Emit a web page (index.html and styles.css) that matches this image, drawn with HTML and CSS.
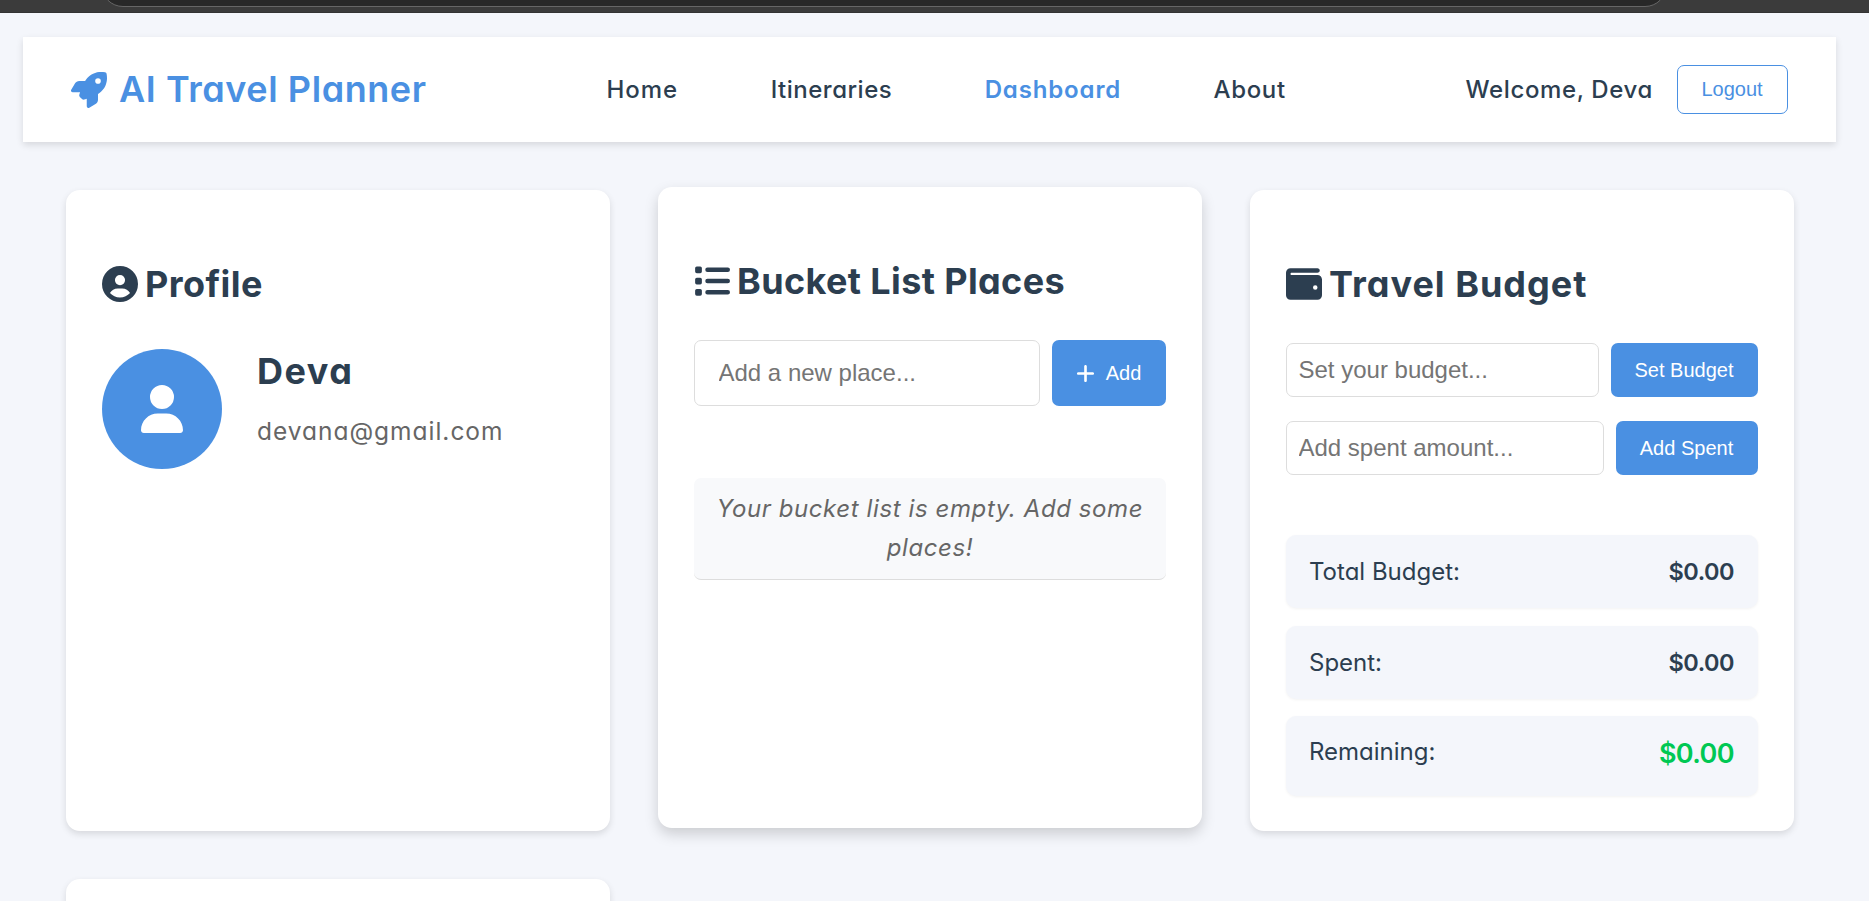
FILE: index.html
```html
<!DOCTYPE html>
<html lang="en">
<head>
<meta charset="utf-8">
<title>AI Travel Planner</title>
<link rel="stylesheet" href="styles.css">
</head>
<body>
<div class="browser-edge"><div class="address-bar"></div></div>
<header class="header">
  <div class="logo">
    <svg class="logo-icon" viewBox="0 0 512 512"><path d="M156.6 384.9L125.7 354c-8.5-8.5-11.5-20.8-7.7-32.2c3-8.9 7-20.5 11.8-33.8L24 288c-8.6 0-16.6-4.6-20.9-12.1s-4.2-16.7 .2-24.1l52.5-88.5c13-21.9 36.5-35.3 61.9-35.3l82.3 0c2.4-4 4.8-7.7 7.2-11.3C289.1-4.1 411.1-8.1 483.9 5.3c11.6 2.1 20.6 11.2 22.8 22.8c13.4 72.9 9.3 194.8-111.4 276.7c-3.5 2.4-7.3 4.8-11.3 7.2l0 82.3c0 25.4-13.4 49-35.3 61.9l-88.5 52.5c-7.4 4.4-16.6 4.5-24.1 .2s-12.1-12.2-12.1-20.9l0-107.2c-14.1 4.9-26.4 8.9-35.7 11.9c-11.2 3.6-23.4 .5-31.8-7.8zM384 168a40 40 0 1 0 0-80 40 40 0 1 0 0 80z"/></svg>
    <span class="logo-text">AI Travel Planner</span>
  </div>
  <nav class="nav">
    <a class="nav-link home">Home</a>
    <a class="nav-link itineraries">Itineraries</a>
    <a class="nav-link active">Dashboard</a>
    <a class="nav-link about">About</a>
  </nav>
  <div class="user">
    <span class="welcome">Welcome, Deva</span>
    <button class="logout">Logout</button>
  </div>
</header>
<main class="grid">
  <section class="card">
    <h2 class="title"><svg class="title-icon" viewBox="0 0 512 512"><path d="M399 384.2C376.9 345.8 335.4 320 288 320l-64 0c-47.4 0-88.9 25.8-111 64.2c35.2 39.2 86.2 63.8 143 63.8s107.8-24.7 143-63.8zM0 256a256 256 0 1 1 512 0A256 256 0 1 1 0 256zm256 16a72 72 0 1 0 0-144 72 72 0 1 0 0 144z"/></svg><span class="t-profile">Profile</span></h2>
    <div class="profile">
      <div class="avatar"><svg viewBox="0 0 448 512"><path d="M224 256A128 128 0 1 0 224 0a128 128 0 1 0 0 256zm-45.7 48C79.8 304 0 383.8 0 482.3C0 498.7 13.3 512 29.7 512l388.6 0c16.4 0 29.7-13.3 29.7-29.7C448 383.8 368.2 304 269.7 304l-91.4 0z"/></svg></div>
      <div class="profile-info">
        <h3 class="name">Deva</h3>
        <p class="email">devana@gmail.com</p>
      </div>
    </div>
  </section>
  <section class="card raised">
    <h2 class="title"><svg class="title-icon" viewBox="0 0 512 512"><path d="M40 48h48a24 24 0 0 1 24 24v48a24 24 0 0 1-24 24H40a24 24 0 0 1-24-24V72a24 24 0 0 1 24-24zM40 208h48a24 24 0 0 1 24 24v48a24 24 0 0 1-24 24H40a24 24 0 0 1-24-24v-48a24 24 0 0 1 24-24zM40 368h48a24 24 0 0 1 24 24v48a24 24 0 0 1-24 24H40a24 24 0 0 1-24-24v-48a24 24 0 0 1 24-24zM192 64h288a32 32 0 0 1 0 64H192a32 32 0 0 1 0-64zM192 224h288a32 32 0 0 1 0 64H192a32 32 0 0 1 0-64zM192 384h288a32 32 0 0 1 0 64H192a32 32 0 0 1 0-64z"/></svg><span class="t-bucket">Bucket List Places</span></h2>
    <div class="form-row place-row">
      <input class="field" type="text" placeholder="Add a new place...">
      <button class="btn add"><svg viewBox="0 0 448 512"><path d="M256 80c0-17.7-14.3-32-32-32s-32 14.3-32 32l0 144L48 224c-17.7 0-32 14.3-32 32s14.3 32 32 32l144 0 0 144c0 17.7 14.3 32 32 32s32-14.3 32-32l0-144 144 0c17.7 0 32-14.3 32-32s-14.3-32-32-32l-144 0 0-144z"/></svg>Add</button>
    </div>
    <p class="empty">Your bucket list is empty. Add some places!</p>
  </section>
  <section class="card">
    <h2 class="title"><svg class="title-icon" viewBox="0 0 512 512"><path d="M64 32C28.7 32 0 60.7 0 96L0 416c0 35.3 28.7 64 64 64l384 0c35.3 0 64-28.7 64-64l0-224c0-35.3-28.7-64-64-64L80 128c-8.8 0-16-7.2-16-16s7.2-16 16-16l368 0c17.7 0 32-14.3 32-32s-14.3-32-32-32L64 32zM416 272a32 32 0 1 1 0 64 32 32 0 1 1 0-64z"/></svg><span class="t-budget">Travel Budget</span></h2>
    <div class="form-row"><input class="field" type="text" placeholder="Set your budget..."><button class="btn set">Set Budget</button></div>
    <div class="form-row"><input class="field" type="text" placeholder="Add spent amount..."><button class="btn spent">Add Spent</button></div>
    <div class="totals">
      <div class="total"><span>Total Budget:</span><strong>$0.00</strong></div>
      <div class="total"><span>Spent:</span><strong>$0.00</strong></div>
      <div class="total remaining"><span>Remaining:</span><strong>$0.00</strong></div>
    </div>
  </section>
  <section class="card"></section>
</main>
</body>
</html>
```
FILE: styles.css
```css
* { box-sizing: border-box; }
html, body { height: 100%; overflow: hidden; }
body {
  margin: 0;
  background: #f4f6fb;
  color: #2c3e50;
  font-family: Inter, sans-serif;
  font-feature-settings: "cv11";
  font-size: 24px;
  line-height: 39px;
}
svg { fill: currentColor; display: block; flex: none; }
h2, h3, p { margin: 0; }
button, input { font-family: "Liberation Sans", sans-serif; }

.browser-edge { height: 13px; padding: 0 202px 0 101px; background: #3b3b3b; overflow: hidden; border-bottom: 1px solid #333; }
.address-bar { height: 44px; margin-top: -37px; background: #282828; border: 1px solid #666; border-radius: 22px; }

.header {
  height: 105px;
  margin: 24px 33px 0 23px;
  padding: 0 48px;
  display: flex;
  align-items: center;
  justify-content: space-between;
  background: #fff;
  box-shadow: 0 3px 7px rgba(0, 0, 0, .12);
}
.logo { display: flex; align-items: center; gap: 12px; color: #4a90e2; font-size: 36px; font-weight: 600; }
.logo-icon { width: 36px; height: 36px; }
.logo-text { letter-spacing: .57px; }
.nav { display: flex; gap: 92.5px; font-weight: 500; }
.home { letter-spacing: 1px; }
.itineraries { letter-spacing: .5px; }
.nav-link.active { color: #4a90e2; font-weight: 600; letter-spacing: .85px; }
.about { letter-spacing: .65px; }
.user { display: flex; align-items: center; gap: 24px; font-weight: 500; }
.welcome { letter-spacing: .62px; }
.logout { width: 111px; height: 49px; padding: 0 1px 0 0; border: 1px solid #4a90e2; border-radius: 7px; background: #fff; color: #4a90e2; font-size: 20px; }

.grid { display: grid; grid-template-columns: repeat(3, 544px); grid-template-rows: 641px 641px; gap: 48px; padding: 48px 66px; }
.card { padding: 36px; border-radius: 14px; background: #fff; box-shadow: 0 3px 7px rgba(0, 0, 0, .12); }
.raised { transform: translateY(-3px); box-shadow: 0 6px 14px rgba(0, 0, 0, .17); }
.title { display: flex; align-items: center; gap: 7px; height: 58px; margin: 29px 0 30px; font-size: 36px; font-weight: 700; }
.title-icon { width: 36px; height: 36px; }
.t-profile { letter-spacing: .45px; }
.t-bucket { letter-spacing: .38px; }
.t-budget { letter-spacing: 1px; }

.profile { display: flex; gap: 35px; margin-top: 36px; }
.avatar { width: 120px; height: 120px; border-radius: 50%; background: #4a90e2; color: #fff; display: flex; align-items: center; justify-content: center; }
.avatar svg { width: 42px; height: 48px; }
.name { font-size: 36px; font-weight: 700; line-height: 44px; letter-spacing: 1.5px; }
.email { color: #666; margin-top: 19px; font-size: 24.5px; letter-spacing: .98px; }

.form-row { display: flex; gap: 12px; height: 54px; margin-bottom: 24px; }
.field { flex: 1; min-width: 0; padding: 0 11.5px; border: 1px solid #ddd; border-radius: 7px; background: #fff; font-size: 24px; }
.field::placeholder { color: #757575; }
.btn { display: flex; align-items: center; justify-content: center; padding: 0 1px 0 0; border: 0; border-radius: 7px; background: #4a90e2; color: #fff; font-size: 20px; }
.set { width: 147px; }
.spent { width: 142px; }
.place-row { height: 66px; margin-bottom: 72px; }
.place-row .field { padding: 0 23.5px; }
.add { width: 114px; gap: 11px; }
.add svg { width: 19px; height: 21px; }
.empty { height: 102px; padding: 11px 20px; border-bottom: 1px solid #ddd; border-radius: 7px; background: #f8f9fb; color: #666; font-style: italic; text-align: center; letter-spacing: .6px; }

.totals { display: grid; gap: 17.5px; margin-top: 60px; }
.total { display: flex; justify-content: space-between; height: 73px; padding: 17px 24px 0 23px; border-radius: 10px; background: #f4f6fb; box-shadow: 0 1px 3px rgba(0, 0, 0, .05); }
.total strong { font-weight: 600; font-size: 23.5px; letter-spacing: -.5px; }
.remaining { height: 80px; padding-top: 16px; }
.remaining strong { color: #00c853; font-size: 27px; line-height: 43px; letter-spacing: -.6px; }
```
